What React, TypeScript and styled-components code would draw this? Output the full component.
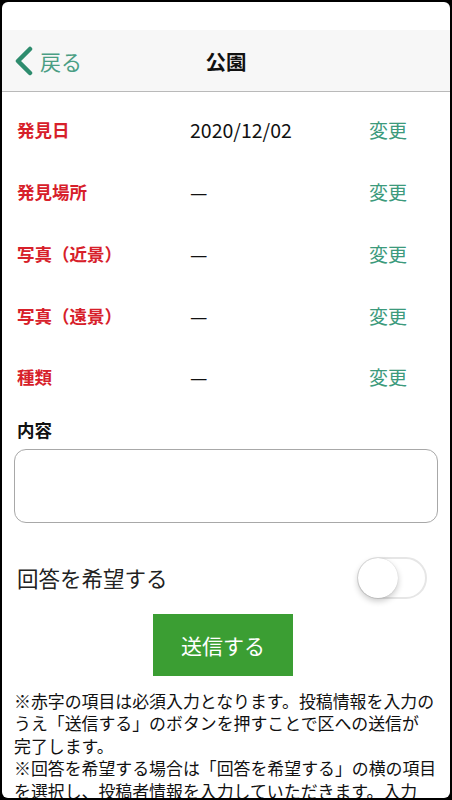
import React from "react";
import styled, { createGlobalStyle } from "styled-components";

const GlobalStyle = createGlobalStyle`
  html, body {
    margin: 0;
    padding: 0;
    background: #000;
  }
  body {
    font-family: "Noto Sans CJK JP", "Noto Sans", sans-serif;
  }
`;

const Screen = styled.div`
  margin: 2px;
  height: 796px;
  border-radius: 6px;
  background: #fff;
  overflow: hidden;
  display: flex;
  flex-direction: column;
`;

const StatusBar = styled.div`
  height: 28px;
  flex: none;
`;

const NavBar = styled.header`
  height: 61px;
  flex: none;
  background: #f7f7f7;
  border-bottom: 1px solid #b9b9b9;
  display: grid;
  grid-template-columns: 1fr auto 1fr;
  align-items: center;
  padding: 0 12px;
`;

const BackButton = styled.button`
  justify-self: start;
  display: flex;
  align-items: center;
  gap: 6px;
  border: none;
  background: none;
  padding: 0;
  color: #4a9e84;
  font-family: inherit;
  font-size: 21px;
  cursor: pointer;
`;

const Title = styled.h1`
  margin: 0;
  font-size: 20.5px;
  font-weight: 700;
  color: #111;
`;

const Content = styled.main`
  padding: 7px 12px 0 12px;
  display: flex;
  flex-direction: column;
`;

const Row = styled.div`
  height: 61.75px;
  display: grid;
  grid-template-columns: 173px 1fr auto;
  align-items: center;
  padding-left: 3px;
  padding-right: 31px;
`;

const Label = styled.span`
  color: #d7202a;
  font-weight: 700;
  font-size: 17.5px;
`;

const Value = styled.span`
  color: #111;
  font-size: 19.5px;
`;

const ChangeLink = styled.a`
  color: #3c9a7c;
  font-size: 19px;
  text-decoration: none;
  cursor: pointer;
`;

const SectionLabel = styled.div`
  margin-top: 9px;
  padding-left: 3px;
  font-size: 17.5px;
  font-weight: 700;
  color: #111;
  line-height: 26px;
`;

const TextArea = styled.textarea`
  margin-top: 6px;
  height: 74px;
  box-sizing: border-box;
  width: 424px;
  border: 1px solid #a8a8a8;
  border-radius: 12px;
  resize: none;
  font-family: inherit;
  font-size: 17px;
  padding: 8px 12px;
  outline: none;
`;

const ToggleRow = styled.label`
  margin-top: 34px;
  height: 42px;
  display: flex;
  align-items: center;
  justify-content: space-between;
  padding-left: 3px;
  padding-right: 11px;
`;

const ToggleText = styled.span`
  font-size: 21.5px;
  color: #222;
`;

const Track = styled.span<{ $on: boolean }>`
  width: 70px;
  height: 42px;
  box-sizing: border-box;
  border-radius: 21px;
  border: 2px solid #e6e6e6;
  background: ${(p) => (p.$on ? "#4cd964" : "#fff")};
  display: flex;
  align-items: center;
  justify-content: ${(p) => (p.$on ? "flex-end" : "flex-start")};
`;

const Thumb = styled.span`
  width: 40px;
  height: 40px;
  margin: -1px;
  border-radius: 50%;
  background: #fff;
  box-shadow: 0 3px 6px rgba(0, 0, 0, 0.22), 0 0 1px rgba(0, 0, 0, 0.2);
`;

const SubmitButton = styled.button`
  align-self: center;
  margin-top: 15px;
  margin-right: 6px;
  width: 140px;
  height: 62px;
  border: none;
  background: #3b9e33;
  color: #fff;
  font-family: inherit;
  font-size: 21px;
  cursor: pointer;
`;

const Note = styled.p`
  margin: 14px 0 0;
  width: 426px;
  font-size: 16.9px;
  line-height: 22.5px;
  color: #111;
`;

const rows = [
  { label: "発見日", value: "2020/12/02" },
  { label: "発見場所", value: "—" },
  { label: "写真（近景）", value: "—" },
  { label: "写真（遠景）", value: "—" },
  { label: "種類", value: "—" }
];

export default function App(): JSX.Element {
  const [wantsReply, setWantsReply] = React.useState(false);

  return (
    <>
      <GlobalStyle />
      <Screen>
        <StatusBar />
        <NavBar>
          <BackButton>
            <svg width="20" height="30" viewBox="0 0 20 30">
              <polyline
                points="16,3 4,15 16,27"
                fill="none"
                stroke="#2e8c6e"
                strokeWidth="4.5"
                strokeLinecap="round"
                strokeLinejoin="round"
              />
            </svg>
            戻る
          </BackButton>
          <Title>公園</Title>
          <span />
        </NavBar>
        <Content>
          {rows.map((r) => (
            <Row key={r.label}>
              <Label>{r.label}</Label>
              <Value>{r.value}</Value>
              <ChangeLink>変更</ChangeLink>
            </Row>
          ))}
          <SectionLabel>内容</SectionLabel>
          <TextArea />
          <ToggleRow onClick={() => setWantsReply(!wantsReply)}>
            <ToggleText>回答を希望する</ToggleText>
            <Track $on={wantsReply}>
              <Thumb />
            </Track>
          </ToggleRow>
          <SubmitButton>送信する</SubmitButton>
          <Note>
            ※赤字の項目は必須入力となります。投稿情報を入力のうえ「送信する」のボタンを押すことで区への送信が
            <br />
            完了します。
            <br />
            ※回答を希望する場合は「回答を希望する」の横の項目を選択し、投稿者情報を入力していただきます。入力
          </Note>
        </Content>
      </Screen>
    </>
  );
}
